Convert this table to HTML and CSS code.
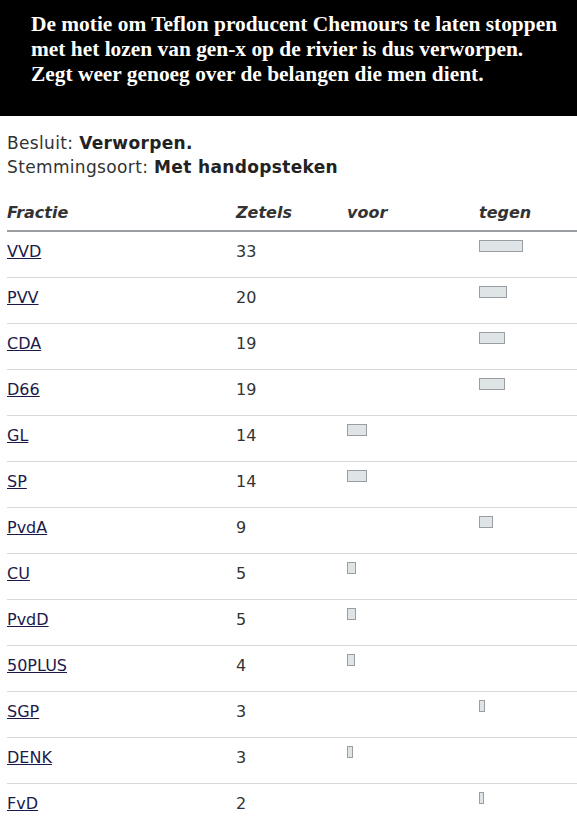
FILE: index.html
```html
<!DOCTYPE html>
<html>
<head>
<meta charset="utf-8">
<link rel="stylesheet" href="styles.css">
</head>
<body>
<div class="banner">
  <p>De motie om Teflon producent Chemours te laten stoppen<br>met het lozen van gen-x op de rivier is dus verworpen.<br>Zegt weer genoeg over de belangen die men dient.</p>
</div>
<div class="content">
  <div class="meta">Besluit: <strong>Verworpen.</strong></div>
  <div class="meta">Stemmingsoort: <strong>Met handopsteken</strong></div>
  <table class="votes">
    <thead>
      <tr><th class="c1">Fractie</th><th class="c2">Zetels</th><th class="c3">voor</th><th class="c4">tegen</th></tr>
    </thead>
    <tbody>
      <tr><td><a href="#">VVD</a></td><td>33</td><td></td><td><span class="bar" style="width:42px"></span></td></tr>
      <tr><td><a href="#">PVV</a></td><td>20</td><td></td><td><span class="bar" style="width:26px"></span></td></tr>
      <tr><td><a href="#">CDA</a></td><td>19</td><td></td><td><span class="bar" style="width:24px"></span></td></tr>
      <tr><td><a href="#">D66</a></td><td>19</td><td></td><td><span class="bar" style="width:24px"></span></td></tr>
      <tr><td><a href="#">GL</a></td><td>14</td><td><span class="bar" style="width:18px"></span></td><td></td></tr>
      <tr><td><a href="#">SP</a></td><td>14</td><td><span class="bar" style="width:18px"></span></td><td></td></tr>
      <tr><td><a href="#">PvdA</a></td><td>9</td><td></td><td><span class="bar" style="width:12px"></span></td></tr>
      <tr><td><a href="#">CU</a></td><td>5</td><td><span class="bar" style="width:7px"></span></td><td></td></tr>
      <tr><td><a href="#">PvdD</a></td><td>5</td><td><span class="bar" style="width:7px"></span></td><td></td></tr>
      <tr><td><a href="#">50PLUS</a></td><td>4</td><td><span class="bar" style="width:6px"></span></td><td></td></tr>
      <tr><td><a href="#">SGP</a></td><td>3</td><td></td><td><span class="bar" style="width:4px"></span></td></tr>
      <tr><td><a href="#">DENK</a></td><td>3</td><td><span class="bar" style="width:4px"></span></td><td></td></tr>
      <tr><td><a href="#">FvD</a></td><td>2</td><td></td><td><span class="bar" style="width:3px"></span></td></tr>
    </tbody>
  </table>
</div>
</body>
</html>
```

FILE: styles.css
```css
html, body {
  margin: 0;
  padding: 0;
  background: #fff;
}
.banner {
  background: #000;
  color: #fff;
  height: 116px;
  padding: 12px 16px 0 31px;
  box-sizing: border-box;
}
.banner p {
  margin: 0;
  font-family: "Liberation Serif", serif;
  font-weight: bold;
  font-size: 21.4px;
  line-height: 25px;
}
.content {
  padding: 15px 0 0 7px;
  font-family: "DejaVu Sans", Verdana, sans-serif;
  font-size: 16px;
  color: #333;
}
.meta {
  line-height: 24px;
  font-size: 17px;
  letter-spacing: 0.35px;
}
.meta strong {
  color: #222;
}
.votes {
  border-collapse: collapse;
  margin-top: 20px;
  width: 570px;
  font-size: 16px;
}
.votes th {
  text-align: left;
  font-style: italic;
  font-weight: bold;
  color: #333;
  padding: 4px 0 7px;
  line-height: 20px;
  border-bottom: 2px solid #9a9da2;
}
.votes .c1 { width: 229px; }
.votes .c2 { width: 111px; }
.votes .c3 { width: 132px; }
.votes td {
  vertical-align: top;
  padding: 8px 0 13px;
  line-height: 24px;
  border-bottom: 1px solid #d8d8d8;
}
.votes a {
  color: #1c1a4a;
  text-decoration: underline;
}
.bar {
  display: block;
  height: 10px;
  background: #dfe4e7;
  border: 1px solid #9a9ea3;
}
```
